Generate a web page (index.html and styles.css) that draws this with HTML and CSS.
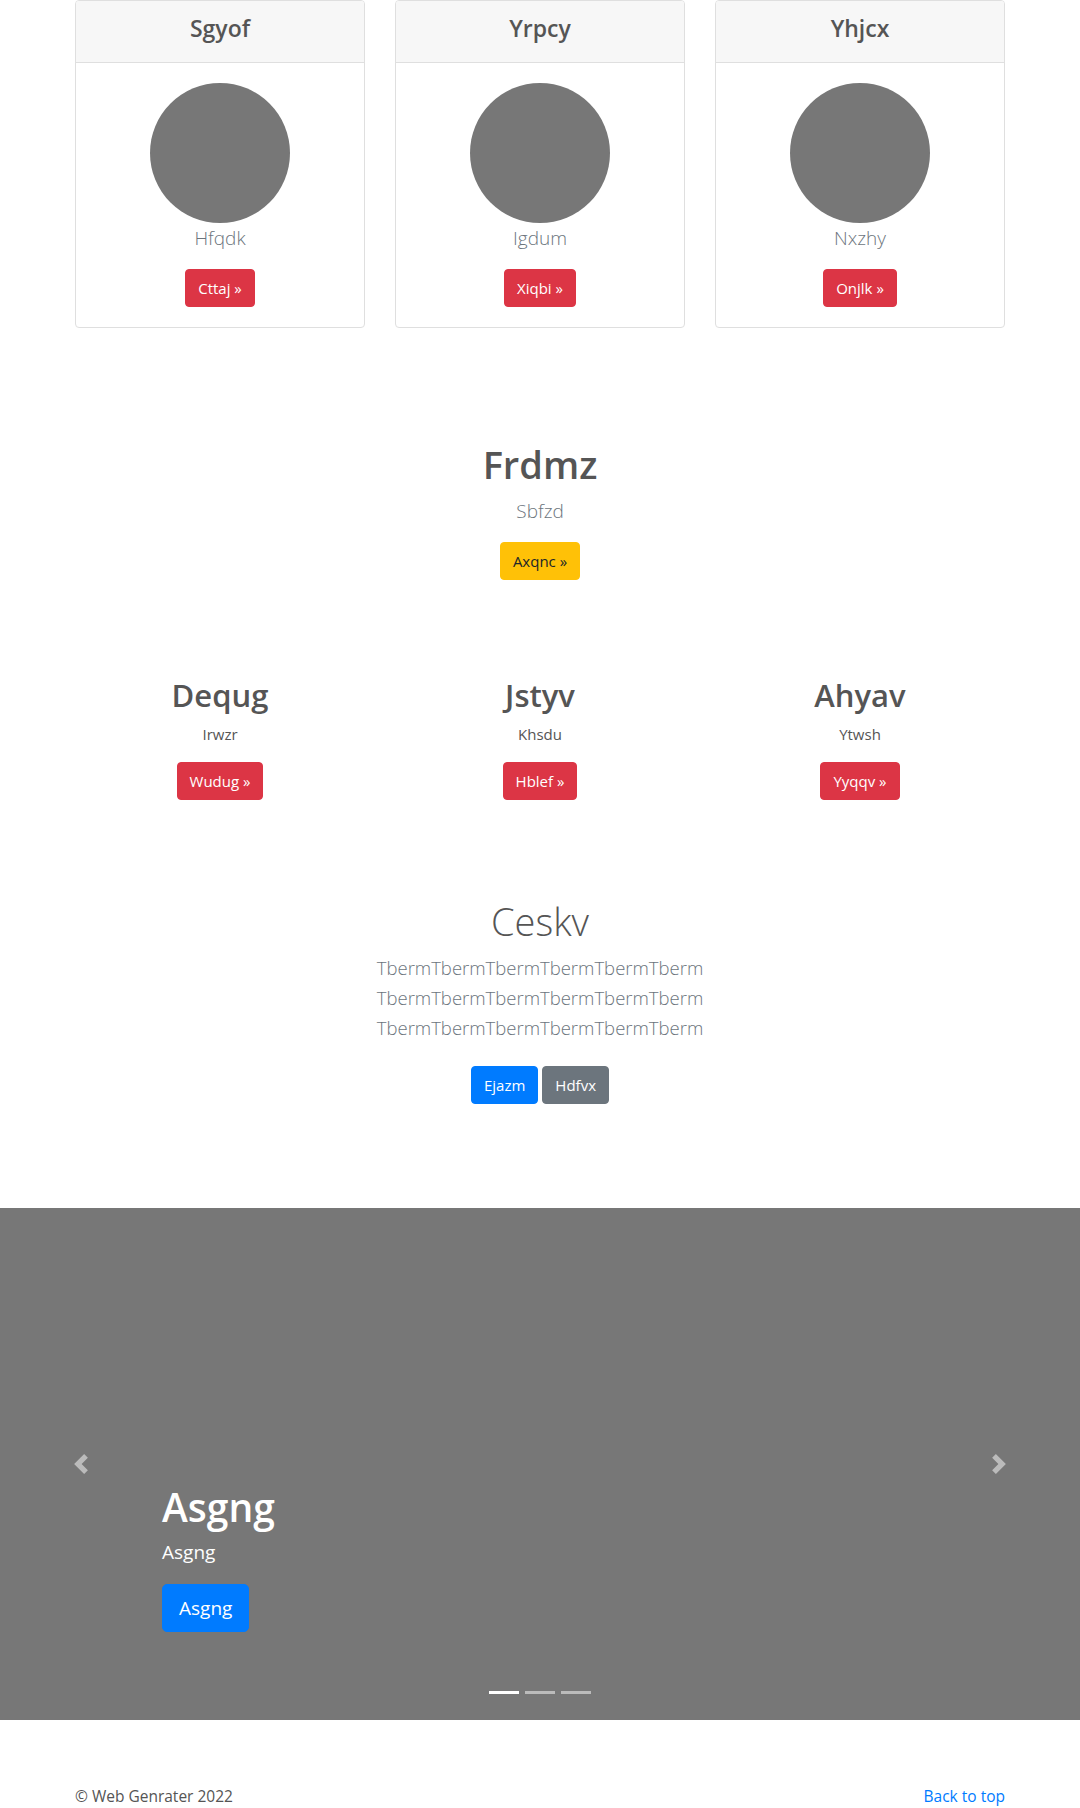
FILE: index.html
```html
<!DOCTYPE html>
<html lang="en">
<head>
<meta charset="utf-8">
<title>Web Genrater</title>
<link rel="stylesheet" href="styles.css">
</head>
<body>
<main>
  <div class="container">
    <div class="card-deck">
      <div class="card">
        <div class="card-header"><h4 class="card-title">Sgyof</h4></div>
        <div class="card-body">
          <div class="avatar"></div>
          <p class="lead muted">Hfqdk</p>
          <a class="btn btn-danger" href="#">Cttaj &raquo;</a>
        </div>
      </div>
      <div class="card">
        <div class="card-header"><h4 class="card-title">Yrpcy</h4></div>
        <div class="card-body">
          <div class="avatar"></div>
          <p class="lead muted">Igdum</p>
          <a class="btn btn-danger" href="#">Xiqbi &raquo;</a>
        </div>
      </div>
      <div class="card">
        <div class="card-header"><h4 class="card-title">Yhjcx</h4></div>
        <div class="card-body">
          <div class="avatar"></div>
          <p class="lead muted">Nxzhy</p>
          <a class="btn btn-danger" href="#">Onjlk &raquo;</a>
        </div>
      </div>
    </div>

    <section class="hero">
      <h1 class="hero-title">Frdmz</h1>
      <p class="lead muted">Sbfzd</p>
      <a class="btn btn-warning" href="#">Axqnc &raquo;</a>
    </section>

    <section class="features">
      <div class="feature">
        <h2 class="feature-title">Dequg</h2>
        <p class="feature-text">Irwzr</p>
        <a class="btn btn-danger" href="#">Wudug &raquo;</a>
      </div>
      <div class="feature">
        <h2 class="feature-title">Jstyv</h2>
        <p class="feature-text">Khsdu</p>
        <a class="btn btn-danger" href="#">Hblef &raquo;</a>
      </div>
      <div class="feature">
        <h2 class="feature-title">Ahyav</h2>
        <p class="feature-text">Ytwsh</p>
        <a class="btn btn-danger" href="#">Yyqqv &raquo;</a>
      </div>
    </section>

    <section class="about">
      <h1 class="about-title">Ceskv</h1>
      <p class="lead muted about-text">TbermTbermTbermTbermTbermTberm TbermTbermTbermTbermTbermTberm TbermTbermTbermTbermTbermTberm</p>
      <div class="about-actions">
        <a class="btn btn-primary" href="#">Ejazm</a>
        <a class="btn btn-secondary" href="#">Hdfvx</a>
      </div>
    </section>
  </div>

  <div class="carousel">
    <div class="carousel-caption">
      <h1 class="caption-title">Asgng</h1>
      <p class="caption-text">Asgng</p>
      <a class="btn btn-primary btn-lg" href="#">Asgng</a>
    </div>
    <a class="carousel-control prev" href="#" aria-label="Previous">
      <svg width="20" height="20" viewBox="0 0 8 8"><path fill="#fff" d="M5.25 0l-4 4 4 4 1.5-1.5L4.25 4l2.5-2.5L5.25 0z"/></svg>
    </a>
    <a class="carousel-control next" href="#" aria-label="Next">
      <svg width="20" height="20" viewBox="0 0 8 8"><path fill="#fff" d="M2.75 0l-1.5 1.5L3.75 4l-2.5 2.5L2.75 8l4-4-4-4z"/></svg>
    </a>
    <ol class="carousel-indicators">
      <li class="active"></li>
      <li></li>
      <li></li>
    </ol>
  </div>

  <footer class="container footer">
    <p class="copy">&copy; Web Genrater 2022</p>
    <a class="back" href="#">Back to top</a>
  </footer>
</main>
</body>
</html>
```
FILE: styles.css
```css
* { box-sizing: border-box; }
html, body { margin: 0; padding: 0; }
body {
  font-family: "Open Sans", "Noto Sans", "Liberation Sans", sans-serif;
  font-size: 16px;
  line-height: 1.5;
  color: #555;
  background: #fff;
}
h1, h2, h4, p { margin: 0; }
a { text-decoration: none; }

.container {
  width: 930px;
  margin: 0 auto;
}

/* cards */
.card-deck {
  display: grid;
  grid-template-columns: repeat(3, 290px);
  column-gap: 30px;
}
.card {
  border: 1px solid #dfdfdf;
  border-radius: 4px;
  overflow: hidden;
  display: flex;
  flex-direction: column;
  text-align: center;
}
.card-header {
  background: #f7f7f7;
  border-bottom: 1px solid #dfdfdf;
  padding: 12px 20px 20px;
  height: 62px;
}
.card-title {
  font-size: 23px;
  font-weight: 600;
  line-height: 30px;
  color: #555;
}
.card-body {
  padding: 20px;
  display: flex;
  flex-direction: column;
  align-items: center;
}
.avatar {
  width: 140px;
  height: 140px;
  border-radius: 50%;
  background: #777;
}
.lead {
  font-size: 19px;
  font-weight: 300;
  line-height: 30px;
}
.muted { color: #6c757d; }
.card-body .lead { margin-bottom: 16px; }

/* buttons */
.btn {
  display: inline-block;
  font-size: 15px;
  line-height: 24px;
  padding: 6px 12px;
  border: 1px solid transparent;
  border-radius: 4px;
  color: #fff;
  text-align: center;
  white-space: nowrap;
}
.btn-danger { background: #dc3545; border-color: #dc3545; }
.btn-warning { background: #ffc107; border-color: #ffc107; color: #212529; }
.btn-primary { background: #007bff; border-color: #007bff; }
.btn-secondary { background: #6c757d; border-color: #6c757d; }
.btn-lg {
  font-size: 19px;
  line-height: 30px;
  padding: 8px 16px;
  border-radius: 5px;
}

/* hero */
.hero {
  margin-top: 112px;
  display: flex;
  flex-direction: column;
  align-items: center;
  text-align: center;
}
.hero-title {
  font-size: 38px;
  font-weight: 600;
  line-height: 48px;
  margin-bottom: 8px;
  color: #555;
}
.hero .lead { margin-bottom: 16px; }

/* features */
.features {
  margin-top: 96px;
  display: grid;
  grid-template-columns: repeat(3, 290px);
  column-gap: 30px;
}
.feature {
  display: flex;
  flex-direction: column;
  align-items: center;
  text-align: center;
}
.feature-title {
  font-size: 31px;
  font-weight: 600;
  line-height: 38px;
  margin-bottom: 8px;
  color: #555;
}
.feature-text {
  font-size: 15px;
  line-height: 24px;
  margin-bottom: 16px;
}

/* about */
.about {
  margin-top: 97px;
  display: flex;
  flex-direction: column;
  align-items: center;
  text-align: center;
}
.about-title {
  font-size: 38px;
  font-weight: 300;
  line-height: 48px;
  margin-bottom: 8px;
  color: #555;
}
.about-text {
  width: 450px;
  font-size: 18.5px;
}
.about-actions {
  margin-top: 23px;
  display: flex;
  gap: 4px;
}

/* carousel */
.carousel {
  position: relative;
  margin-top: 104px;
  height: 512px;
  background: #777;
  display: flex;
  align-items: flex-end;
}
.carousel-caption {
  margin-left: 162px;
  padding-bottom: 88px;
  display: flex;
  flex-direction: column;
  align-items: flex-start;
  color: #fff;
}
.caption-title {
  font-size: 39px;
  font-weight: 600;
  line-height: 48px;
  margin-bottom: 6px;
}
.caption-text {
  font-size: 19px;
  line-height: 30px;
  margin-bottom: 17px;
}
.carousel-control {
  position: absolute;
  top: 0;
  bottom: 0;
  width: 162px;
  display: flex;
  align-items: center;
  justify-content: center;
  opacity: .5;
}
.carousel-control.prev { left: 0; }
.carousel-control.next { right: 0; }
.carousel-control svg { display: block; }
.carousel-indicators {
  position: absolute;
  left: 0;
  right: 0;
  bottom: 16px;
  margin: 0;
  padding: 0;
  list-style: none;
  display: flex;
  justify-content: center;
}
.carousel-indicators li {
  width: 30px;
  height: 23px;
  margin: 0 3px;
  border-top: 10px solid transparent;
  border-bottom: 10px solid transparent;
  background: #fff;
  background-clip: padding-box;
  opacity: .5;
}
.carousel-indicators li.active { opacity: 1; }

/* footer */
.footer {
  padding-top: 64px;
  display: flex;
  justify-content: space-between;
  align-items: flex-start;
}
.copy, .back {
  font-size: 15.5px;
  line-height: 24px;
}
.back { color: #007bff; }
```
